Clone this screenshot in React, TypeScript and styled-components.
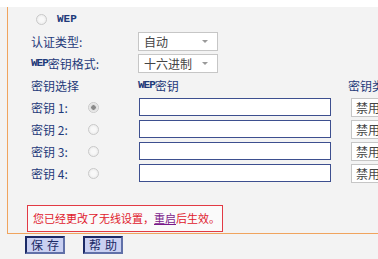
import React from 'react';
import styled, {createGlobalStyle} from 'styled-components';

const GlobalStyle = createGlobalStyle`
  html, body {
    margin: 0;
    padding: 0;
    background: #ffffff;
  }
  body {
    font-family: "Noto Sans CJK SC", "DejaVu Sans", sans-serif;
    font-size: 12px;
    color: #1f3a7a;
  }
`;

const Page = styled.div`
  width: 378px;
  height: 259px;
  overflow: hidden;
  padding-top: 7px;
  box-sizing: border-box;
  background: linear-gradient(#ffffff, #ffffff) top / 100% 7px no-repeat, #f3f3f3;
`;

const Panel = styled.div`
  margin-left: 7px;
  height: 227px;
  box-sizing: border-box;
  border-left: 1px solid #f0a45e;
  border-bottom: 1px solid #f0a45e;
  background: #f3f3f3;
  padding: 1px 0 0 23px;
  display: flex;
  flex-direction: column;
`;

const Row = styled.div`
  display: grid;
  grid-template-columns: 107px 210px 1fr;
  align-items: center;
  height: 22px;
  white-space: nowrap;
`;

const LabelCell = styled.div`
  display: flex;
  align-items: center;
  height: 100%;
`;

const KeyLabel = styled.span`
  width: 57px;
`;

const Radio = styled.span<{checked?: boolean; indent?: number}>`
  display: inline-block;
  width: 11px;
  height: 11px;
  border-radius: 50%;
  box-sizing: border-box;
  border: 1px solid #c9c9c9;
  background: ${p =>
    p.checked
      ? 'radial-gradient(circle, #8a8a8a 0 2px, #d9d9d9 2.5px, #f4f4f4 5px)'
      : 'radial-gradient(circle, #f8f8f8 0 2px, #ececec 5px)'};
  margin-left: ${p => p.indent ?? 0}px;
`;

const RadioText = styled.span`
  margin-left: 10px;
  font-size: 11px;
  font-weight: bold;
  font-family: "Liberation Mono", monospace;
`;

const Select = styled.div<{w: number}>`
  position: relative;
  width: ${p => p.w}px;
  height: 19px;
  box-sizing: border-box;
  border: 1px solid #c6c6c6;
  background: #ffffff;
  padding-left: 5px;
  line-height: 17px;
  color: #444444;
  &::after {
    content: '';
    position: absolute;
    right: 9px;
    top: 7px;
    border-left: 3px solid transparent;
    border-right: 3px solid transparent;
    border-top: 3px solid #9a9a9a;
  }
`;

const DisableSelect = styled.div`
  width: 40px;
  height: 19px;
  box-sizing: border-box;
  border: 1px solid #c6c6c6;
  border-right: none;
  background: #ffffff;
  padding-left: 4px;
  line-height: 17px;
  color: #444444;
  margin-left: 3px;
`;

const KeyInput = styled.div`
  width: 192px;
  height: 18px;
  box-sizing: border-box;
  border: 1px solid #3d4f8f;
  background: #ffffff;
  margin-left: 1px;
`;

const SmallHead = styled.span`
  font-size: 11px;
  font-weight: bold;
  font-family: "Liberation Mono", "Noto Sans CJK SC", monospace;
  letter-spacing: -1px;
`;

const Notice = styled.div`
  margin: 21px 0 0 -4px;
  width: 196px;
  height: 27px;
  box-sizing: border-box;
  border: 1px solid #e23a44;
  background: #fafafa;
  color: #e0202c;
  padding-left: 5px;
  font-size: 11px;
  line-height: 25px;
  white-space: nowrap;
`;

const Restart = styled.a`
  color: #7a1a8a;
  text-decoration: underline;
`;

const ButtonBar = styled.div`
  display: flex;
  gap: 18px;
  padding: 2px 0 0 25px;
`;

const Button = styled.button`
  width: 40px;
  height: 18px;
  box-sizing: border-box;
  padding: 0;
  border: 2px solid #1b2a66;
  border-right-color: #6070a8;
  border-bottom-color: #6070a8;
  background: #c9d0f2;
  color: #1b2a66;
  font-family: "Noto Sans CJK SC", sans-serif;
  font-size: 12px;
  line-height: 14px;
  letter-spacing: 4px;
  text-indent: 4px;
`;

const keys = [1, 2, 3, 4];

export default function App() {
  return (
    <>
      <GlobalStyle />
      <Page>
        <Panel>
          <Row>
            <LabelCell>
              <Radio indent={5} />
              <RadioText>WEP</RadioText>
            </LabelCell>
          </Row>
          <Row>
            <LabelCell>认证类型:</LabelCell>
            <Select w={80}>自动</Select>
          </Row>
          <Row>
            <LabelCell>
              <SmallHead>WEP</SmallHead>密钥格式:
            </LabelCell>
            <Select w={80}>十六进制</Select>
          </Row>
          <Row>
            <LabelCell>密钥选择</LabelCell>
            <LabelCell>
              <SmallHead>WEP</SmallHead>密钥
            </LabelCell>
            <LabelCell>密钥类型</LabelCell>
          </Row>
          {keys.map(k => (
            <Row key={k}>
              <LabelCell>
                <KeyLabel>密钥 {k}:</KeyLabel>
                <Radio checked={k === 1} />
              </LabelCell>
              <KeyInput />
              <DisableSelect>禁用</DisableSelect>
            </Row>
          ))}
          <Notice>
            您已经更改了无线设置，<Restart>重启</Restart>后生效。
          </Notice>
        </Panel>
        <ButtonBar>
          <Button>保存</Button>
          <Button>帮助</Button>
        </ButtonBar>
      </Page>
    </>
  );
}
